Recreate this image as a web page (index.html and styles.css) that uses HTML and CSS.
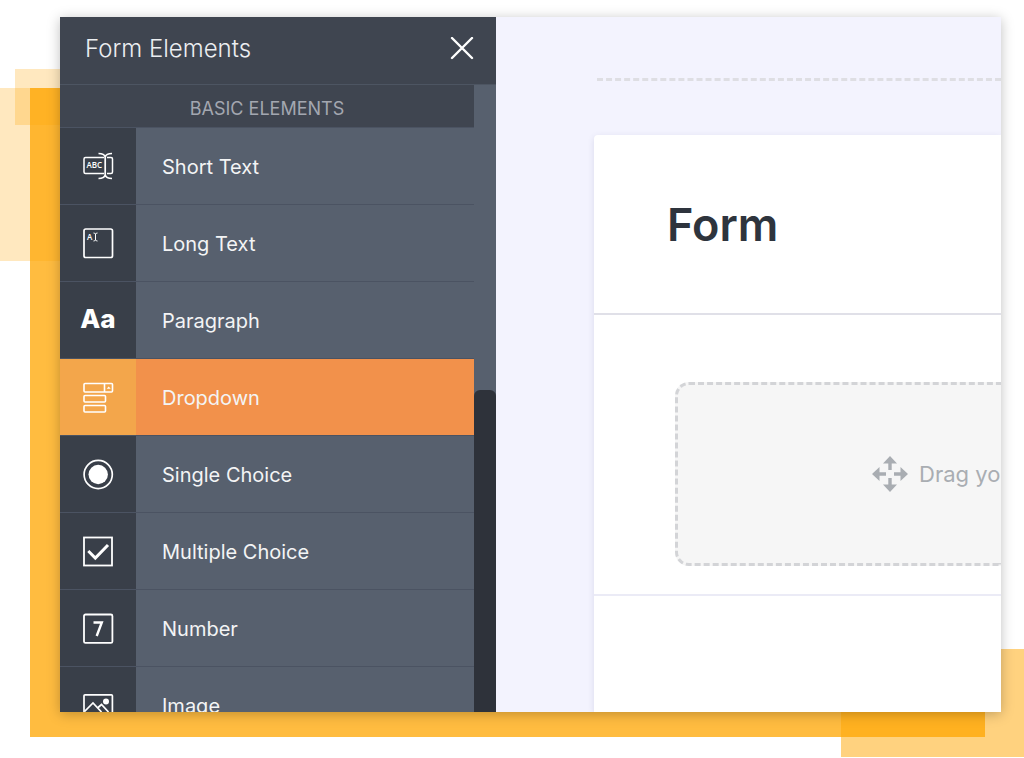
FILE: index.html
```html
<!DOCTYPE html>
<html lang="en">
<head>
<meta charset="utf-8">
<meta name="viewport" content="width=device-width, initial-scale=1">
<title>Form Elements</title>
<link rel="stylesheet" href="styles.css">
</head>
<body>
<div class="stage">
  <div class="block block-left"></div>
  <div class="block block-corner"></div>
  <div class="block block-back"></div>
  <div class="block block-right"></div>

  <div class="window">
    <aside class="sidebar">
      <header class="sidebar-head">
        <h2 class="sidebar-title">Form Elements</h2>
        <button class="close" type="button" aria-label="Close">
          <svg width="24" height="24" viewBox="0 0 24 24"><path d="M2 1l20 20M22 1L2 21" fill="none" stroke="currentColor" stroke-width="2.4" stroke-linecap="round"/></svg>
        </button>
      </header>
      <div class="sidebar-body">
        <div class="elements">
          <h3 class="group-title">BASIC ELEMENTS</h3>
          <ul class="list">
            <li><button class="item" type="button">
              <span class="item-icon"><svg width="32" height="32" viewBox="0 0 32 32" fill="none" stroke="currentColor" stroke-width="1.5"><path d="M22 7.500H3.500a1.500 1.500 0 0 0-1.500 1.500v13a1.500 1.500 0 0 0 1.500 1.500H22M25 7.500h4a1.500 1.500 0 0 1 1.500 1.500v13a1.500 1.500 0 0 1-1.500 1.500h-4"/><path d="M23.200 6v19M16.500 3.500c3.500 0 6 1 6.700 3.500 .7-2.500 3.300-3.500 6.800-3.500M16.500 28.500c3.500 0 6-1 6.700-3.500 .7 2.500 3.300 3.500 6.800 3.500" stroke-width="1.700"/><text class="abc" x="4.500" y="18">ABC</text></svg></span>
              <span class="item-label">Short Text</span></button></li>
            <li><button class="item" type="button">
              <span class="item-icon"><svg width="32" height="32" viewBox="0 0 32 32" fill="none" stroke="currentColor"><rect x="2" y="2" width="28.500" height="28.500" rx="1.800" stroke-width="1.700"/><path d="M11.500 6c1 0 1.700.3 2 1 .3-.7 1-1 2-1M11.500 14c1 0 1.700-.3 2-1 .3.700 1 1 2 1M13.500 7v6" stroke-width="1"/><text class="abc" x="5" y="12.500">A</text></svg></span>
              <span class="item-label">Long Text</span></button></li>
            <li><button class="item" type="button">
              <span class="item-icon type-icon">Aa</span>
              <span class="item-label">Paragraph</span></button></li>
            <li><button class="item item-active" type="button">
              <span class="item-icon"><svg width="32" height="32" viewBox="0 0 32 32" fill="none" stroke="currentColor" stroke-width="1.600"><rect x="2" y="2.500" width="28.500" height="8.500" rx="1"/><path d="M22.500 2.500V11"/><rect x="2" y="14.500" width="21.500" height="6.500" rx="1"/><rect x="2" y="24.500" width="21.500" height="6.500" rx="1"/><path d="M24.700 7.800h4L26.700 5.500z" fill="currentColor" stroke="none"/></svg></span>
              <span class="item-label">Dropdown</span></button></li>
            <li><button class="item" type="button">
              <span class="item-icon"><svg width="32" height="32" viewBox="0 0 32 32"><circle cx="16.200" cy="16.500" r="14.100" fill="none" stroke="currentColor" stroke-width="1.700"/><circle cx="16.200" cy="16.500" r="9.700" fill="currentColor"/></svg></span>
              <span class="item-label">Single Choice</span></button></li>
            <li><button class="item" type="button">
              <span class="item-icon"><svg width="32" height="32" viewBox="0 0 32 32" fill="none" stroke="currentColor"><rect x="2" y="2.500" width="28" height="28" stroke-width="1.800"/><path d="M6.300 16l7 7L26 10" stroke-width="3"/></svg></span>
              <span class="item-label">Multiple Choice</span></button></li>
            <li><button class="item" type="button">
              <span class="item-icon"><svg width="32" height="32" viewBox="0 0 32 32" fill="none" stroke="currentColor"><rect x="2" y="2.500" width="28.400" height="28.400" rx="1.500" stroke-width="1.800"/><path d="M11.500 10.500h8.300L14.700 24" stroke-width="2.400"/></svg></span>
              <span class="item-label">Number</span></button></li>
            <li><button class="item" type="button">
              <span class="item-icon"><svg width="32" height="32" viewBox="0 0 32 32" fill="none" stroke="currentColor"><rect x="2" y="5.800" width="28.400" height="22.400" rx="1" stroke-width="1.700"/><path d="M2.500 22.500l8.500-8.500 8.500 9M15.500 19l4-3.500 7 7.500" stroke-width="1.700"/><circle cx="24" cy="12.500" r="3" fill="currentColor" stroke="none"/></svg></span>
              <span class="item-label">Image</span></button></li>
          </ul>
        </div>
        <div class="track"><div class="thumb"></div></div>
      </div>
    </aside>

    <main class="canvas">
      <div class="drop-line"></div>
      <section class="card">
        <header class="card-head"><h1 class="card-title">Form</h1></header>
        <div class="card-body">
          <div class="dropzone">
            <svg width="36" height="36" viewBox="0 0 36 36" fill="currentColor"><path d="M18 0l7 7.500h-5.300V14h-3.400V7.500H11zM18 36l7-7.500h-5.300V22h-3.400v6.500H11zM0 18l7.500-7v5.300H14v3.400H7.500V25zM36 18l-7.500-7v5.300H22v3.400h6.500V25z"/></svg>
            <span>Drag yo</span>
          </div>
        </div>
      </section>
    </main>
  </div>
</div>
</body>
</html>
```
FILE: styles.css
```css
* {
  box-sizing: border-box;
}

body {
  margin: 0;
  background: #fff;
  font-family: Inter, "Liberation Sans", sans-serif;
}

h1, h2, h3, ul {
  margin: 0;
  padding: 0;
}

button {
  border: 0;
  padding: 0;
  background: none;
  color: inherit;
  font: inherit;
  cursor: pointer;
}

svg {
  display: block;
  flex: none;
}

.stage {
  position: relative;
  display: flex;
  height: 100vh;
  padding: 17px 23px 46px 60px;
  overflow: hidden;
}

/* Translucent colour blocks behind the window */
.block {
  position: absolute;
}

.block-left {
  left: 0;
  top: 88px;
  width: 80px;
  height: 173px;
  background: rgba(255, 165, 0, 0.25);
}

.block-corner {
  left: 15px;
  top: 69px;
  width: 80px;
  height: 56px;
  background: rgba(255, 165, 0, 0.25);
}

.block-back {
  left: 30px;
  right: 39px;
  top: 88px;
  bottom: 21px;
  background: rgba(255, 165, 0, 0.75);
}

.block-right {
  right: 0;
  bottom: 1px;
  width: 183px;
  height: 108px;
  background: rgba(255, 165, 0, 0.5);
}

.window {
  position: relative;
  display: flex;
  flex: 1;
  min-width: 0;
  box-shadow: 0 2px 12px rgba(0, 0, 0, 0.25);
}

.sidebar {
  display: flex;
  flex-direction: column;
  flex: none;
  width: 436px;
  overflow: hidden;
  background: #3f4550;
}

.sidebar-head {
  display: flex;
  align-items: center;
  justify-content: space-between;
  flex: none;
  height: 68px;
  padding: 0 22px 4px 25px;
  border-bottom: 1px solid #4d5562;
}

.sidebar-title {
  color: #eceef1;
  font-size: 24px;
  font-weight: 300;
  line-height: 32px;
}

.close {
  color: #fff;
}

.sidebar-body {
  display: flex;
  flex: 1;
  min-height: 0;
}

.elements {
  flex: 1;
  min-width: 0;
  overflow: hidden;
}

.group-title {
  height: 42px;
  padding-top: 4px;
  color: #a3a7b0;
  font-size: 18px;
  font-weight: 400;
  line-height: 40px;
  text-align: center;
}

.list {
  list-style: none;
}

.item {
  display: flex;
  width: 100%;
  height: 77px;
  border-top: 1px solid #4b5362;
  background: #57606e;
  color: #fff;
  text-align: left;
}

.item-icon {
  display: flex;
  align-items: center;
  justify-content: center;
  width: 76px;
  height: 100%;
  background: #393f49;
}

.type-icon {
  padding-bottom: 4px;
  font-family: Inter, sans-serif;
  font-size: 26px;
  font-weight: 800;
}

.abc {
  fill: currentColor;
  stroke: none;
  font-family: "Open Sans", sans-serif;
  font-size: 8px;
  font-weight: 600;
}

.item-label {
  padding-left: 26px;
  color: #f3f4f5;
  font-size: 20px;
  line-height: 78px;
}

.item-active {
  background: #f2914b;
}

.item-active .item-icon {
  background: #f3a64b;
}

.track {
  flex: none;
  width: 22px;
  padding-top: 305px;
  background: #57606e;
}

.thumb {
  height: 100%;
  border-radius: 6px 6px 0 0;
  background: #2e323a;
}

.canvas {
  display: flex;
  flex-direction: column;
  flex: 1;
  min-width: 0;
  padding: 61px 0 0 98px;
  overflow: hidden;
  background: #f3f3fe;
}

.drop-line {
  flex: none;
  margin-left: 3px;
  border-top: 3px dashed #dedee3;
}

.card {
  flex: 1;
  margin-top: 54px;
  border-top-left-radius: 4px;
  background: #fff;
  box-shadow: 0 2px 6px rgba(80, 80, 130, 0.15);
}

.card-head {
  height: 180px;
  padding: 62px 0 0 73px;
  border-bottom: 2px solid #e0e0e8;
}

.card-title {
  color: #2e343d;
  font-size: 45px;
  font-weight: 600;
  line-height: 56px;
}

.card-body {
  padding: 67px 0 28px 81px;
  border-bottom: 2px solid #ebebf6;
}

.dropzone {
  display: flex;
  align-items: center;
  gap: 11px;
  height: 184px;
  padding-left: 194px;
  overflow: hidden;
  border: 3px dashed #d3d4d7;
  border-right: 0;
  border-radius: 14px 0 0 14px;
  background: #f6f6f6;
  color: #a9adb2;
  font-size: 22px;
  line-height: 32px;
  white-space: nowrap;
}
```
